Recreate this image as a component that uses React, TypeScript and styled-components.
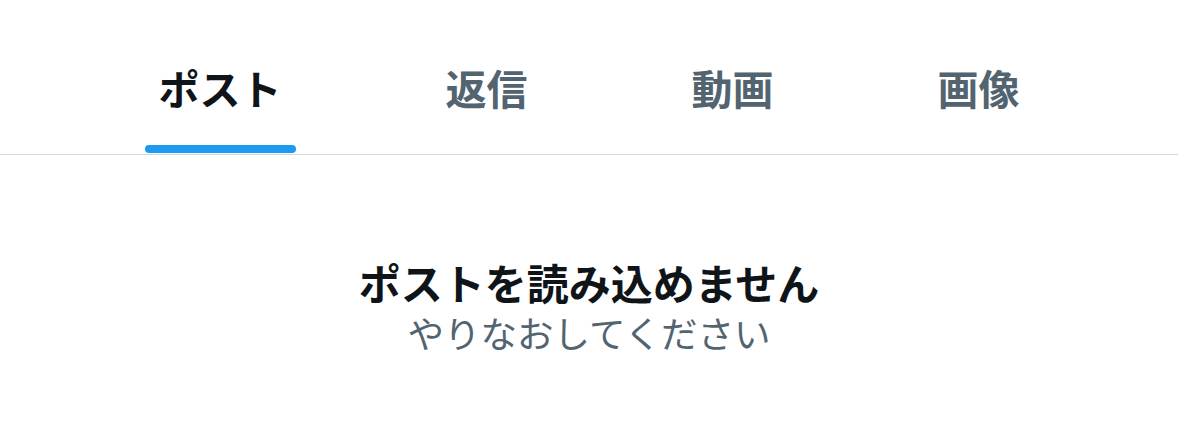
import React from "react";
import styled, { createGlobalStyle } from "styled-components";

const Global = createGlobalStyle`
  html, body { margin: 0; padding: 0; background: #ffffff; }
  body { font-family: "Noto Sans CJK JP", "Noto Sans", sans-serif; }
`;

const Page = styled.div`
  width: 1178px;
  height: 445px;
  background: #ffffff;
  display: flex;
  flex-direction: column;
`;

const TabBar = styled.nav`
  display: flex;
  justify-content: center;
  border-bottom: 1px solid #cfd9de;
  height: 155px;
  box-sizing: border-box;
`;

const Tab = styled.div`
  display: flex;
  flex-direction: column;
  align-items: center;
  padding: 67px 82px 0;
  box-sizing: border-box;
`;

const TabLabel = styled.span<{ $active?: boolean }>`
  font-size: 41px;
  line-height: 41px;
  font-weight: 700;
  color: ${(p) => (p.$active ? "#0f1419" : "#536471")};
  white-space: nowrap;
`;

const Indicator = styled.div`
  align-self: stretch;
  margin: 37px -14px 0;
  height: 8px;
  border-radius: 4px;
  background: #1d9bf0;
`;

const Message = styled.div`
  display: flex;
  flex-direction: column;
  align-items: center;
  padding-top: 104px;
`;

const Title = styled.div`
  font-size: 42px;
  line-height: 46px;
  font-weight: 700;
  color: #0f1419;
  white-space: nowrap;
`;

const Sub = styled.div`
  margin-top: 8px;
  font-size: 36.5px;
  line-height: 40px;
  font-weight: 400;
  color: #536471;
  white-space: nowrap;
`;

const tabs = ["ポスト", "返信", "動画", "画像"];

export default function App() {
  return (
    <Page>
      <Global />
      <TabBar>
        {tabs.map((t, i) => (
          <Tab key={t}>
            <TabLabel $active={i === 0}>{t}</TabLabel>
            {i === 0 && <Indicator />}
          </Tab>
        ))}
      </TabBar>
      <Message>
        <Title>ポストを読み込めません</Title>
        <Sub>やりなおしてください</Sub>
      </Message>
    </Page>
  );
}
